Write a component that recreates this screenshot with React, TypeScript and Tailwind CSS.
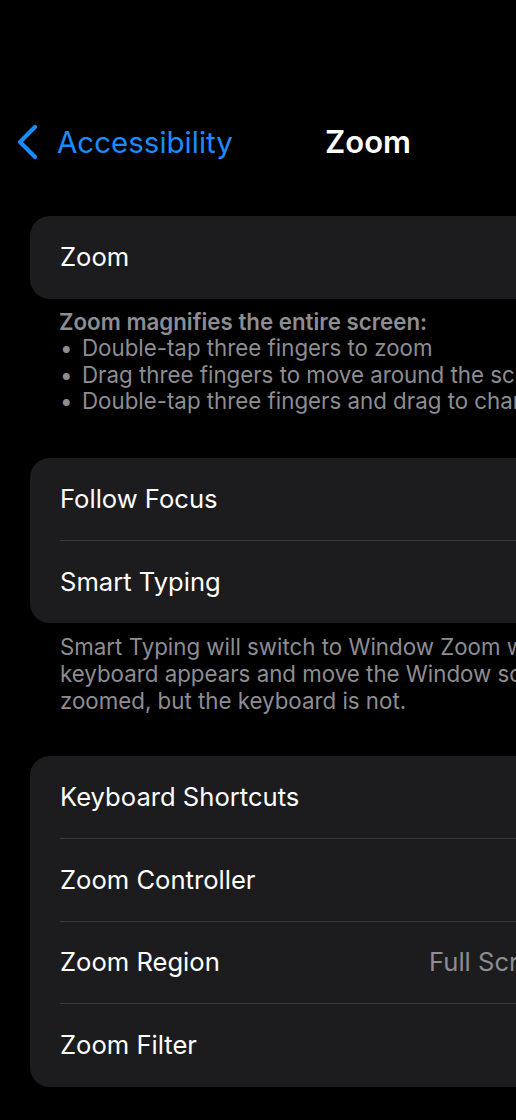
import React from "react";

const font = { fontFamily: "Inter, 'Noto Sans', sans-serif" };

function Toggle() {
  return (
    <div className="w-[76px] h-[46px] rounded-full bg-[#39393d] p-[3px] flex">
      <div className="w-[40px] h-[40px] rounded-full bg-white" />
    </div>
  );
}

function Chevron() {
  return (
    <svg width="12" height="20" viewBox="0 0 12 20" fill="none">
      <path d="M2 2l8 8-8 8" stroke="#5a5a5f" strokeWidth="3" strokeLinecap="round" strokeLinejoin="round" />
    </svg>
  );
}

function Row({ label, value, toggle, divider }: { label: string; value?: string; toggle?: boolean; divider?: boolean }) {
  return (
    <div className="pl-[30px]">
      <div className={`h-[82.7px] flex items-center pr-[30px] ${divider ? "border-b border-[#38383a]" : ""}`}>
        <div className="w-[369px] shrink-0 text-[25.6px] text-white">{label}</div>
        <div className="flex-1 flex items-center justify-between">
          <span className="text-[25.6px] text-[#8d8d92]">{value ?? ""}</span>
          {toggle ? <Toggle /> : <Chevron />}
        </div>
      </div>
    </div>
  );
}

export default function App() {
  return (
    <div className="w-[516px] h-[1120px] overflow-hidden bg-black" style={font}>
      <div className="w-[736px]">
        <div className="h-[100px]" />
        <div className="h-[84px] flex items-center relative">
          <div className="flex items-center pl-[15px]">
            <svg width="24" height="36" viewBox="0 0 24 36" fill="none">
              <path d="M20 3L5 18l15 15" stroke="#1a8cff" strokeWidth="4.2" strokeLinecap="round" strokeLinejoin="round" />
            </svg>
            <span className="ml-[18px] text-[29.5px] text-[#1a8cff]">Accessibility</span>
          </div>
          <div className="absolute inset-0 flex items-center justify-center pointer-events-none">
            <span className="text-[31px] font-semibold text-white">Zoom</span>
          </div>
        </div>
        <div className="h-[32px]" />

        <div className="mx-[30px] rounded-[20px] bg-[#1c1c1e]">
          <Row label="Zoom" toggle />
        </div>
        <div className="pl-[59px] pt-[10px] text-[22.3px] leading-[26.6px] text-[#8d8d92] whitespace-nowrap">
          <div className="font-semibold">Zoom magnifies the entire screen:</div>
          <div className="flex"><span className="w-[23px] pl-[1px]">•</span><span>Double-tap three fingers to zoom</span></div>
          <div className="flex"><span className="w-[23px] pl-[1px]">•</span><span>Drag three fingers to move around the screen</span></div>
          <div className="flex"><span className="w-[23px] pl-[1px]">•</span><span>Double-tap three fingers and drag to change zoom</span></div>
        </div>
        <div className="h-[43px]" />

        <div className="mx-[30px] rounded-[20px] bg-[#1c1c1e]">
          <Row label="Follow Focus" toggle divider />
          <Row label="Smart Typing" toggle />
        </div>
        <div className="pl-[60px] pt-[11px] text-[22.3px] leading-[26.6px] text-[#8d8d92] whitespace-nowrap">
          <div>Smart Typing will switch to Window Zoom when a</div>
          <div>keyboard appears and move the Window so that text is</div>
          <div>zoomed, but the keyboard is not.</div>
        </div>
        <div className="h-[42px]" />

        <div className="mx-[30px] rounded-[20px] bg-[#1c1c1e]">
          <Row label="Keyboard Shortcuts" divider />
          <Row label="Zoom Controller" divider />
          <Row label="Zoom Region" value="Full Screen" divider />
          <Row label="Zoom Filter" />
        </div>
      </div>
    </div>
  );
}
